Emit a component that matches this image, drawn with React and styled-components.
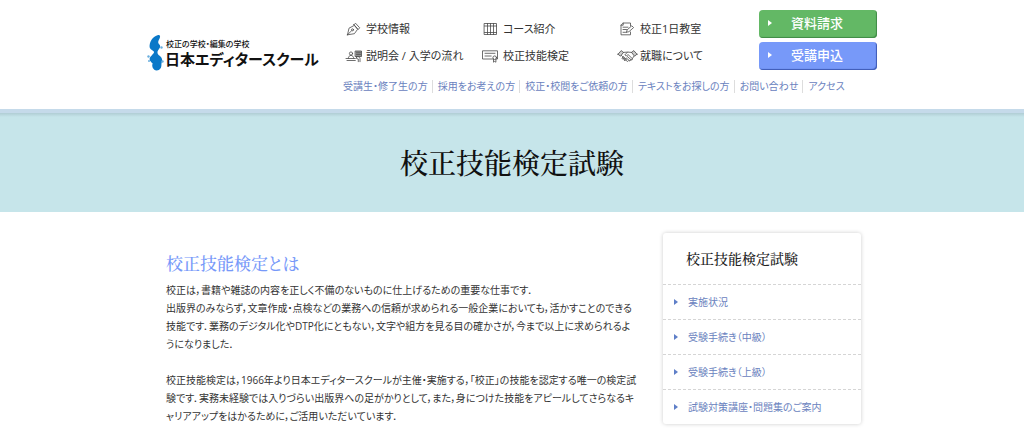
import styled, { createGlobalStyle } from 'styled-components';

const GlobalStyle = createGlobalStyle`
  * {
    box-sizing: border-box;
  }

  body {
    margin: 0;
    background: #ffffff;
    color: #333333;
    font-family: 'Open Sans', 'Noto Sans CJK JP', sans-serif;
    font-size: 10px;
    font-feature-settings: 'palt';
  }

  a {
    color: inherit;
    text-decoration: none;
  }

  ul {
    margin: 0;
    padding: 0;
    list-style: none;
  }
`;

const Header = styled.header`
  border-bottom: 4px solid #c5daea;
`;

const HeaderInner = styled.div`
  display: grid;
  grid-template-columns: 196px 1fr 118px;
  row-gap: 6px;
  max-width: 730px;
  margin: 0 auto;
  padding: 10px 0 13px;
`;

const Logo = styled.a`
  grid-row: 1 / 3;
  display: flex;
  align-items: center;
  gap: 1px;
  color: #111111;
  white-space: nowrap;
`;

const LogoText = styled.span`
  display: flex;
  flex-direction: column;
`;

const LogoSub = styled.span`
  padding-left: 1px;
  font-size: 8px;
  line-height: 12px;
  font-weight: 500;
`;

const LogoName = styled.span`
  font-size: 15px;
  line-height: 18px;
  font-weight: 700;
`;

const MainNav = styled.ul`
  display: grid;
  grid-template-columns: repeat(3, 137px);
  grid-auto-rows: 27px;
  padding: 5px 0 0 3px;
`;

const MainNavLink = styled.a`
  display: flex;
  align-items: center;
  height: 100%;
  font-size: 11px;
  line-height: 16px;
  white-space: nowrap;

  svg {
    flex: none;
    width: 16px;
    height: 14px;
    margin-right: 4px;
    overflow: visible;
    fill: none;
    stroke: #4a4a4a;
    stroke-width: 0.8;
    stroke-linejoin: round;
    stroke-linecap: round;
  }
`;

const Buttons = styled.div`
  display: flex;
  flex-direction: column;
  gap: 4px;
`;

const ActionLink = styled.a`
  position: relative;
  display: flex;
  align-items: center;
  justify-content: center;
  height: 28px;
  padding: 0 2px 2px 0;
  border-radius: 4px;
  background: ${({ $color }) => $color};
  box-shadow: inset -1px -1px 1px ${({ $shade }) => $shade};
  color: #ffffff;
  font-size: 13px;
  font-weight: 500;
  line-height: 20px;

  &::before {
    content: '';
    position: absolute;
    left: 9px;
    top: 10px;
    border-left: 4px solid #ffffff;
    border-top: 3px solid transparent;
    border-bottom: 3px solid transparent;
  }
`;

const SubNav = styled.ul`
  grid-column: 2 / 4;
  display: flex;
  align-items: center;
  height: 20px;
  color: #6a82be;
  line-height: 13px;
  white-space: nowrap;

  li + li {
    margin-left: 4px;
    padding-left: 5px;
    border-left: 1px solid #dddddd;
  }
`;

const Hero = styled.div`
  display: flex;
  align-items: center;
  justify-content: center;
  height: 99px;
  padding-bottom: 2px;
  background: linear-gradient(#b0cdd4, #c6e5ea 4px);
`;

const HeroTitle = styled.h1`
  margin: 0;
  color: #111111;
  font-family: 'Noto Serif CJK JP', 'Noto Sans CJK JP', serif;
  font-size: 28px;
  font-weight: 500;
  line-height: 40px;
`;

const Container = styled.div`
  display: flex;
  align-items: flex-start;
  justify-content: space-between;
  gap: 26px;
  max-width: 698px;
  margin: 0 auto;
  padding: 21px 0 0;
`;

const Main = styled.main`
  flex: 1;
  padding: 18px 0 0 3px;
`;

const Heading = styled.h2`
  margin: 0 0 6px;
  color: #7799f9;
  font-family: 'Noto Serif CJK JP', 'Noto Sans CJK JP', serif;
  font-size: 17px;
  font-weight: 500;
  line-height: 24px;
`;

const Text = styled.p`
  margin: 0 0 18px;
  line-height: 18px;
`;

const Side = styled.aside`
  width: 198px;
  border-radius: 3px;
  box-shadow: 0 0 4px rgba(0, 0, 0, 0.2);
`;

const SideTitle = styled.h2`
  margin: 0;
  padding: 14px 23px 15px;
  color: #222222;
  font-family: 'Noto Serif CJK JP', 'Noto Sans CJK JP', serif;
  font-size: 14px;
  font-weight: 500;
  line-height: 22px;
`;

const SideLink = styled.a`
  display: flex;
  align-items: center;
  height: 35px;
  padding: 0 0 1px 11px;
  border-top: 1px dashed #d5d5d5;
  color: #6a82be;
  line-height: 14px;

  &::before {
    content: '';
    margin-right: 10px;
    border-left: 4px solid #5f7fc8;
    border-top: 3px solid transparent;
    border-bottom: 3px solid transparent;
  }
`;

const PenIcon = () => (
  <svg viewBox='0 0 16 14' aria-hidden='true'>
    <path d='M1.5 12.8 3 6.2 8.3 3.4l3.3 3.9-3.2 4.4-6.9 1.1Zm0 0 4.3-4.3' />
    <circle cx='6.5' cy='7.8' r='1' />
    <path d='m8 2.7 1.5-1.5 4.2 4.6-1.5 1.7L8 2.7Z' />
  </svg>
);

const CourseIcon = () => (
  <svg viewBox='0 0 16 14' aria-hidden='true'>
    <path d='M1.5 1.5h12v11h-12zM4.5 1.5v11M7.5 1.5v11M10.5 1.5v11M1.5 4h12M1.5 10.5h12' />
  </svg>
);

const NoteIcon = () => (
  <svg viewBox='0 0 16 14' aria-hidden='true'>
    <path d='M10.5 4V1H3.2L1 3.2v9.6h9.5V10M1 3.2h2.2V1M3 5.2h5M3 7.5h3.5M3 10.3h2.5' />
    <path d='m6.5 10.2.6-2.3 4.7-4.1 1.8 1.8-4.7 4.1-2.4.5Z' />
  </svg>
);

const SeminarIcon = () => (
  <svg viewBox='0 0 16 14' aria-hidden='true'>
    <circle cx='5' cy='4.5' r='1.6' />
    <path d='M2.3 9.3c0-4 5.4-4 5.4 0M0 9.5h9.3M1 11.5h8.3' />
    <path d='M9.5 2h6v5.5h-6zM10.5 3.8h4M10.5 5.6h4' fill='#999999' />
    <path d='M10.5 8c2-1 3.5 0 3.5 1.5v3.2M10.5 8v1.5l1.8.5v2.7' />
  </svg>
);

const CertificateIcon = () => (
  <svg viewBox='0 0 16 14' aria-hidden='true'>
    <path d='M9.8 10H-.5V1.8h15V10h-1M2 4.3h10M2 7h6.2' />
    <circle cx='11.7' cy='8.7' r='1.8' />
    <path d='M10.5 10.2v3l1.2-.8 1.2.8v-3' />
  </svg>
);

const HandshakeIcon = () => (
  <svg viewBox='0 0 16 14' aria-hidden='true'>
    <path
      d='M-2 5.2 1.2 1.6l2.3 1.8L.5 7.2-2 5.2Zm19 0-3.2-3.6-2.3 1.8 3 3.8 2.5-2Z'
      fill='#cccccc'
    />
    <path d='m3.5 3.4 4-.3 4 .3M1.5 6.5l4.7 5 1.5 1 1-1 1.3.5.7-1.3 1.4.1.4-1.4 1.4-2.2M7.5 3.1 4.8 6c1 1.3 2.2.7 3.2-.5l4.5 4.3M7.3 7.5l3.7 3.2M6.3 9l2.7 2.3' />
    <path
      d='m2.2 8.9 1.2-1.3 1.1.9-1.3 1.5Zm1.9 1.7 1.2-1.3 1.1.9-1.3 1.4Z'
      fill='#999999'
    />
  </svg>
);

const mainNav = [
  { label: '学校情報', Icon: PenIcon },
  { label: 'コース紹介', Icon: CourseIcon },
  { label: '校正1日教室', Icon: NoteIcon },
  { label: '説明会 / 入学の流れ', Icon: SeminarIcon },
  { label: '校正技能検定', Icon: CertificateIcon },
  { label: '就職について', Icon: HandshakeIcon },
];

const subNav = [
  '受講生・修了生の方',
  '採用をお考えの方',
  '校正・校閲をご依頼の方',
  'テキストをお探しの方',
  'お問い合わせ',
  'アクセス',
];

const sideNav = [
  '実施状況',
  '受験手続き（中級）',
  '受験手続き（上級）',
  '試験対策講座・問題集のご案内',
];

export default function App() {
  return (
    <>
      <GlobalStyle />
      <Header>
        <HeaderInner>
          <Logo href='#'>
            <svg width='17' height='38' viewBox='0 0 17 38' aria-hidden='true'>
              <path
                d='M10.5 1.2C5.5 2.5 2.3 8 2.6 13c.2 2.5 3.4 3.2 4.5 5-.6 2.5-4.3 4.3-4.5 7 0 2 2 3.4 3.1 4.6-1.4 2.5.5 7 4 6.9 3.5 0 4.9-3 4.7-5.9 0-2 .9-3 .7-5.2-.5-3.2-4.4-4-4.6-6.6-.2-3 2.5-3.5 2.7-6.5 0-2-2.2-2.3-2-4 .1-2.3 2.9-5 1.5-6.8-.5-.6-1.4-.5-2.2-.3Z'
                fill='#0a78c8'
              />
              <circle cx='14.5' cy='13.5' r='1.2' fill='#69aede' />
              <circle cx='1.5' cy='22.5' r='1.2' fill='#69aede' />
              <circle cx='2' cy='27' r='1' fill='#69aede' />
              <circle cx='15.5' cy='27.5' r='1.2' fill='#69aede' />
            </svg>
            <LogoText>
              <LogoSub>校正の学校・編集の学校</LogoSub>
              <LogoName>日本エディタースクール</LogoName>
            </LogoText>
          </Logo>
          <MainNav>
            {mainNav.map(({ label, Icon }) => (
              <li key={label}>
                <MainNavLink href='#'>
                  <Icon />
                  {label}
                </MainNavLink>
              </li>
            ))}
          </MainNav>
          <Buttons>
            <ActionLink href='#' $color='#63b865' $shade='#3f8a45'>
              資料請求
            </ActionLink>
            <ActionLink href='#' $color='#7799f9' $shade='#3c59b4'>
              受講申込
            </ActionLink>
          </Buttons>
          <SubNav>
            {subNav.map((label) => (
              <li key={label}>
                <a href='#'>{label}</a>
              </li>
            ))}
          </SubNav>
        </HeaderInner>
      </Header>

      <Hero>
        <HeroTitle>校正技能検定試験</HeroTitle>
      </Hero>

      <Container>
        <Main>
          <Heading>校正技能検定とは</Heading>
          <Text>
            校正は，書籍や雑誌の内容を正しく不備のないものに仕上げるための重要な仕事です．
            <br />
            出版界のみならず，文章作成・点検などの業務への信頼が求められる一般企業においても，活かすことのできる技能です．業務のデジタル化やDTP化にともない，文字や組方を見る目の確かさが，今まで以上に求められるようになりました．
          </Text>
          <Text>
            校正技能検定は，1966年より日本エディタースクールが主催・実施する，「校正」の技能を認定する唯一の検定試験です．実務未経験では入りづらい出版界への足がかりとして，また，身につけた技能をアピールしてさらなるキャリアアップをはかるために，ご活用いただいています．
          </Text>
        </Main>
        <Side>
          <SideTitle>校正技能検定試験</SideTitle>
          <ul>
            {sideNav.map((label) => (
              <li key={label}>
                <SideLink href='#'>{label}</SideLink>
              </li>
            ))}
          </ul>
        </Side>
      </Container>
    </>
  );
}
